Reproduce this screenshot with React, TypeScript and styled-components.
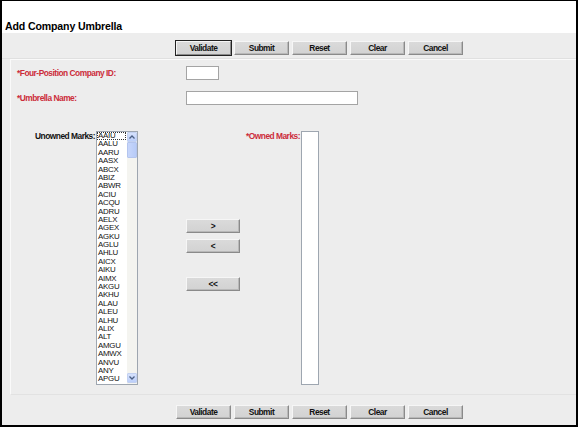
import React from "react";
import styled, { createGlobalStyle } from "styled-components";

const Global = createGlobalStyle`
  html, body { margin: 0; padding: 0; background: #fff; }
  body { font-family: "Liberation Sans", Arial, sans-serif; }
  * { box-sizing: border-box; }
`;

const Frame = styled.div`
  width: 578px;
  height: 427px;
  border: 2px solid #000;
  border-top-width: 1px;
  display: flex;
  flex-direction: column;
  overflow: hidden;
`;

const Header = styled.div`
  height: 32px;
  flex: none;
  background: #fff;
  padding: 19px 0 0 3px;
`;

const Title = styled.h1`
  margin: 0;
  font-size: 10.6px;
  letter-spacing: -0.15px;
  line-height: 12px;
  font-weight: bold;
  color: #000;
`;

const Body = styled.div`
  flex: 1;
  background: #ededed;
  display: flex;
  flex-direction: column;
`;

const ButtonBar = styled.div<{ $top: number; $bottom: number; $line?: boolean }>`
  display: flex;
  gap: 3px;
  padding: ${(p) => p.$top}px 0 ${(p) => p.$bottom}px 174px;
  border-bottom: ${(p) => (p.$line ? "1px solid #e0e0e0" : "none")};
`;

const Btn = styled.button<{ $focus?: boolean; $w?: number }>`
  width: ${(p) => p.$w ?? 55}px;
  height: 14px;
  padding: 0;
  margin: 0;
  font-family: "Liberation Sans", Arial, sans-serif;
  font-size: 8.4px;
  letter-spacing: -0.5px;
  font-weight: bold;
  line-height: 12px;
  color: #111;
  background: linear-gradient(#dadada, #d2d2d2);
  border: 1px solid;
  border-color: #f6f6f6 #8a8a8a #8a8a8a #f6f6f6;
  box-shadow: ${(p) => (p.$focus ? "0 0 0 1px #222" : "inset -1px -1px 0 #b8b8b8")};
  cursor: default;
`;

const Panel = styled.div`
  margin-left: 8px;
  border-left: 1px solid #fafafa;
  border-top: 1px solid #fafafa;
  border-bottom: 1px solid #e2e2e2;
  padding: 6px 0 9px 6px;
`;

const Fields = styled.div`
  display: grid;
  grid-template-columns: 169px auto;
  grid-auto-rows: 14px;
  row-gap: 11px;
  align-items: center;
`;

const Label = styled.label<{ $req?: boolean }>`
  font-size: 8.4px;
  letter-spacing: -0.5px;
  font-weight: bold;
  color: ${(p) => (p.$req ? "#cc2c3a" : "#111")};
  white-space: nowrap;
`;

const TextBox = styled.input<{ $w: number }>`
  width: ${(p) => p.$w}px;
  height: 14px;
  margin: 0;
  padding: 0 2px;
  border: 1px solid #a4a4a4;
  background: #fff;
  font-size: 8px;
`;

const Marks = styled.div`
  margin-top: 26px;
  display: grid;
  grid-template-columns: 79px 42px 48px 54px 61px 18px;
  height: 254px;
`;

const SideLabel = styled(Label)`
  text-align: right;
  padding: 1px 1px 0 0;
  line-height: 9px;
`;

const ListBox = styled.div`
  border: 1px solid #9ea6b0;
  background: #fff;
  display: flex;
  height: 254px;
  overflow: hidden;
`;

const Items = styled.ul`
  list-style: none;
  margin: 0;
  padding: 0;
  flex: 1;
  min-width: 0;
`;

const Item = styled.li<{ $sel?: boolean }>`
  font-size: 7.9px;
  letter-spacing: -0.25px;
  line-height: 8.4px;
  height: 8.4px;
  padding-left: 1px;
  color: #111;
  white-space: nowrap;
  outline: ${(p) => (p.$sel ? "1px dotted #333" : "none")};
  outline-offset: -1px;
  margin: ${(p) => (p.$sel ? "0 1px 0 0" : "0")};
`;

const ScrollBar = styled.div`
  width: 10px;
  flex: none;
  background: #f4f4f0;
  display: flex;
  flex-direction: column;
  padding: 0 0 1px 0;
`;

const ArrowBox = styled.div`
  width: 10px;
  height: 10px;
  background: linear-gradient(#d6e2fd, #bccffa);
  border: 1px solid #c3d1f1;
  border-radius: 1px;
  display: flex;
  align-items: center;
  justify-content: center;
`;

const Thumb = styled.div`
  width: 10px;
  height: 16px;
  background: linear-gradient(90deg, #c7d6fb, #b7cbf8);
  border: 1px solid #b4c5ee;
  border-radius: 1px;
`;

const Track = styled.div`
  flex: 1;
`;

const MoveCol = styled.div`
  display: flex;
  flex-direction: column;
  padding-top: 88px;
`;

const Spacer = styled.div<{ $h: number }>`
  height: ${(p) => p.$h}px;
`;

const marks = [
  "AAIU", "AALU", "AARU", "AASX", "ABCX", "ABIZ", "ABWR", "ACIU", "ACQU", "ADRU",
  "AELX", "AGEX", "AGKU", "AGLU", "AHLU", "AICX", "AIKU", "AIMX", "AKGU", "AKHU",
  "ALAU", "ALEU", "ALHU", "ALIX", "ALT", "AMGU", "AMWX", "ANVU", "ANY", "APGU",
];

const Caret = ({ up }: { up: boolean }) => (
  <svg width="6" height="4" viewBox="0 0 6 4">
    <path
      d={up ? "M0.5 3.5 L3 1 L5.5 3.5" : "M0.5 0.5 L3 3 L5.5 0.5"}
      fill="none"
      stroke="#4d6185"
      strokeWidth="1.3"
    />
  </svg>
);

const actions = ["Validate", "Submit", "Reset", "Clear", "Cancel"];

export default function App() {
  return (
    <>
      <Global />
      <Frame>
        <Header>
          <Title>Add Company Umbrella</Title>
        </Header>
        <Body>
          <ButtonBar $top={8} $bottom={3} $line>
            {actions.map((a, i) => (
              <Btn key={a} $focus={i === 0}>{a}</Btn>
            ))}
          </ButtonBar>
          <Panel>
            <Fields>
              <Label $req>*Four-Position Company ID:</Label>
              <TextBox $w={33} />
              <Label $req>*Umbrella Name:</Label>
              <TextBox $w={172} />
            </Fields>
            <Marks>
              <SideLabel>Unowned Marks:</SideLabel>
              <ListBox>
                <Items>
                  {marks.map((m, i) => (
                    <Item key={m} $sel={i === 0}>{m}</Item>
                  ))}
                </Items>
                <ScrollBar>
                  <ArrowBox><Caret up /></ArrowBox>
                  <Thumb />
                  <Track />
                  <ArrowBox><Caret up={false} /></ArrowBox>
                </ScrollBar>
              </ListBox>
              <div />
              <MoveCol>
                <Btn $w={54}>&gt;</Btn>
                <Spacer $h={6} />
                <Btn $w={54}>&lt;</Btn>
                <Spacer $h={24} />
                <Btn $w={54}>&lt;&lt;</Btn>
              </MoveCol>
              <SideLabel $req>*Owned Marks:</SideLabel>
              <ListBox />
            </Marks>
          </Panel>
          <ButtonBar $top={10} $bottom={0}>
            {actions.map((a) => (
              <Btn key={a}>{a}</Btn>
            ))}
          </ButtonBar>
        </Body>
      </Frame>
    </>
  );
}
